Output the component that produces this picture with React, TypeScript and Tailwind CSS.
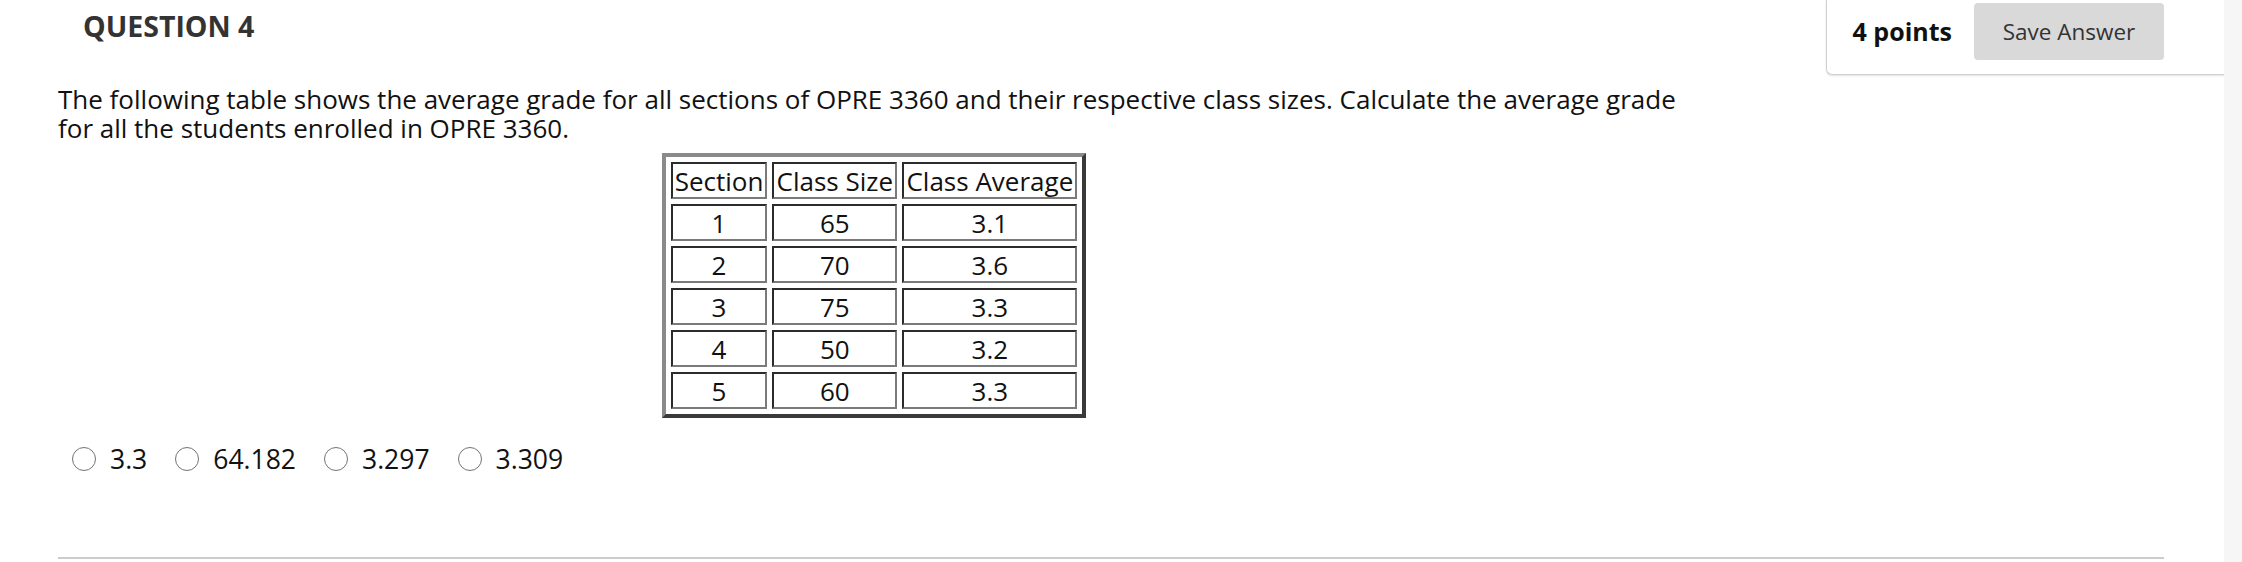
import { useState } from "react";

const rows = [
  { section: "1", size: "65", avg: "3.1" },
  { section: "2", size: "70", avg: "3.6" },
  { section: "3", size: "75", avg: "3.3" },
  { section: "4", size: "50", avg: "3.2" },
  { section: "5", size: "60", avg: "3.3" },
];

const answers = ["3.3", "64.182", "3.297", "3.309"];

const cell =
  "h-[37px] px-[2px] py-0 text-center font-normal border-2 border-t-[#2b2b2b] border-l-[#2b2b2b] border-b-[#7a7a7a] border-r-[#7a7a7a]";

function Radio({ label, checked, onSelect }: { label: string; checked: boolean; onSelect: () => void }) {
  return (
    <label className="flex items-center cursor-pointer" onClick={onSelect}>
      <span className="w-[24px] h-[24px] rounded-full border-[1.5px] border-[#737373] bg-white flex items-center justify-center">
        {checked && <span className="w-[12px] h-[12px] rounded-full bg-[#333]" />}
      </span>
      <span className="ml-[14px] text-[26.5px] leading-[34px] text-[#111]">{label}</span>
    </label>
  );
}

export default function App() {
  const [picked, setPicked] = useState<string | null>(null);

  return (
    <div className="w-[2242px] h-[562px] bg-white flex overflow-hidden font-['Open_Sans',sans-serif]">
      <div className="flex-1 flex flex-col">
        {/* header */}
        <div className="flex justify-between items-start">
          <h2 className="pl-[83px] pt-[6px] text-[28.5px] leading-[40px] font-bold text-[#333]">QUESTION 4</h2>
          <div className="flex items-center pl-[26px] pr-[60px] pt-[3px] pb-[14px] border-l border-b border-[#d0d0d0] rounded-bl-[6px] shadow-[0_1px_2px_rgba(0,0,0,0.12)]">
            <span className="text-[25px] font-bold text-[#111]">4 points</span>
            <button className="ml-[22px] w-[190px] h-[57px] rounded-[4px] bg-[#d9d9d9] text-[22.5px] text-[#333]">
              Save Answer
            </button>
          </div>
        </div>

        {/* question body */}
        <div className="px-[58px] pr-[60px]">
          <div className="w-[1632px] mt-[10px]">
            <p className="text-[26px] leading-[29px] text-[#111]">
              The following table shows the average grade for all sections of OPRE 3360 and their respective class
              sizes. Calculate the average grade for all the students enrolled in OPRE 3360.
            </p>
            <table className="mx-auto mt-[10px] border-separate border-spacing-[5px] border-4 border-t-[#8a8a8a] border-l-[#8a8a8a] border-b-[#3a3a3a] border-r-[#3a3a3a] text-[26px] leading-[30px] text-[#111]">
              <thead>
                <tr>
                  <th className={`${cell} w-[96px]`}>Section</th>
                  <th className={`${cell} w-[125px]`}>Class Size</th>
                  <th className={`${cell} w-[175px]`}>Class Average</th>
                </tr>
              </thead>
              <tbody>
                {rows.map((r) => (
                  <tr key={r.section}>
                    <td className={cell}>{r.section}</td>
                    <td className={cell}>{r.size}</td>
                    <td className={cell}>{r.avg}</td>
                  </tr>
                ))}
              </tbody>
            </table>
          </div>

          <div className="flex items-center gap-[28px] mt-[24px] pl-[14px]">
            {answers.map((a) => (
              <Radio key={a} label={a} checked={picked === a} onSelect={() => setPicked(a)} />
            ))}
          </div>

          <div className="mt-[81px] h-[2px] bg-[#cccccc]" />
        </div>
      </div>
      <div className="w-[18px] bg-[#f6f6f6]" />
    </div>
  );
}
